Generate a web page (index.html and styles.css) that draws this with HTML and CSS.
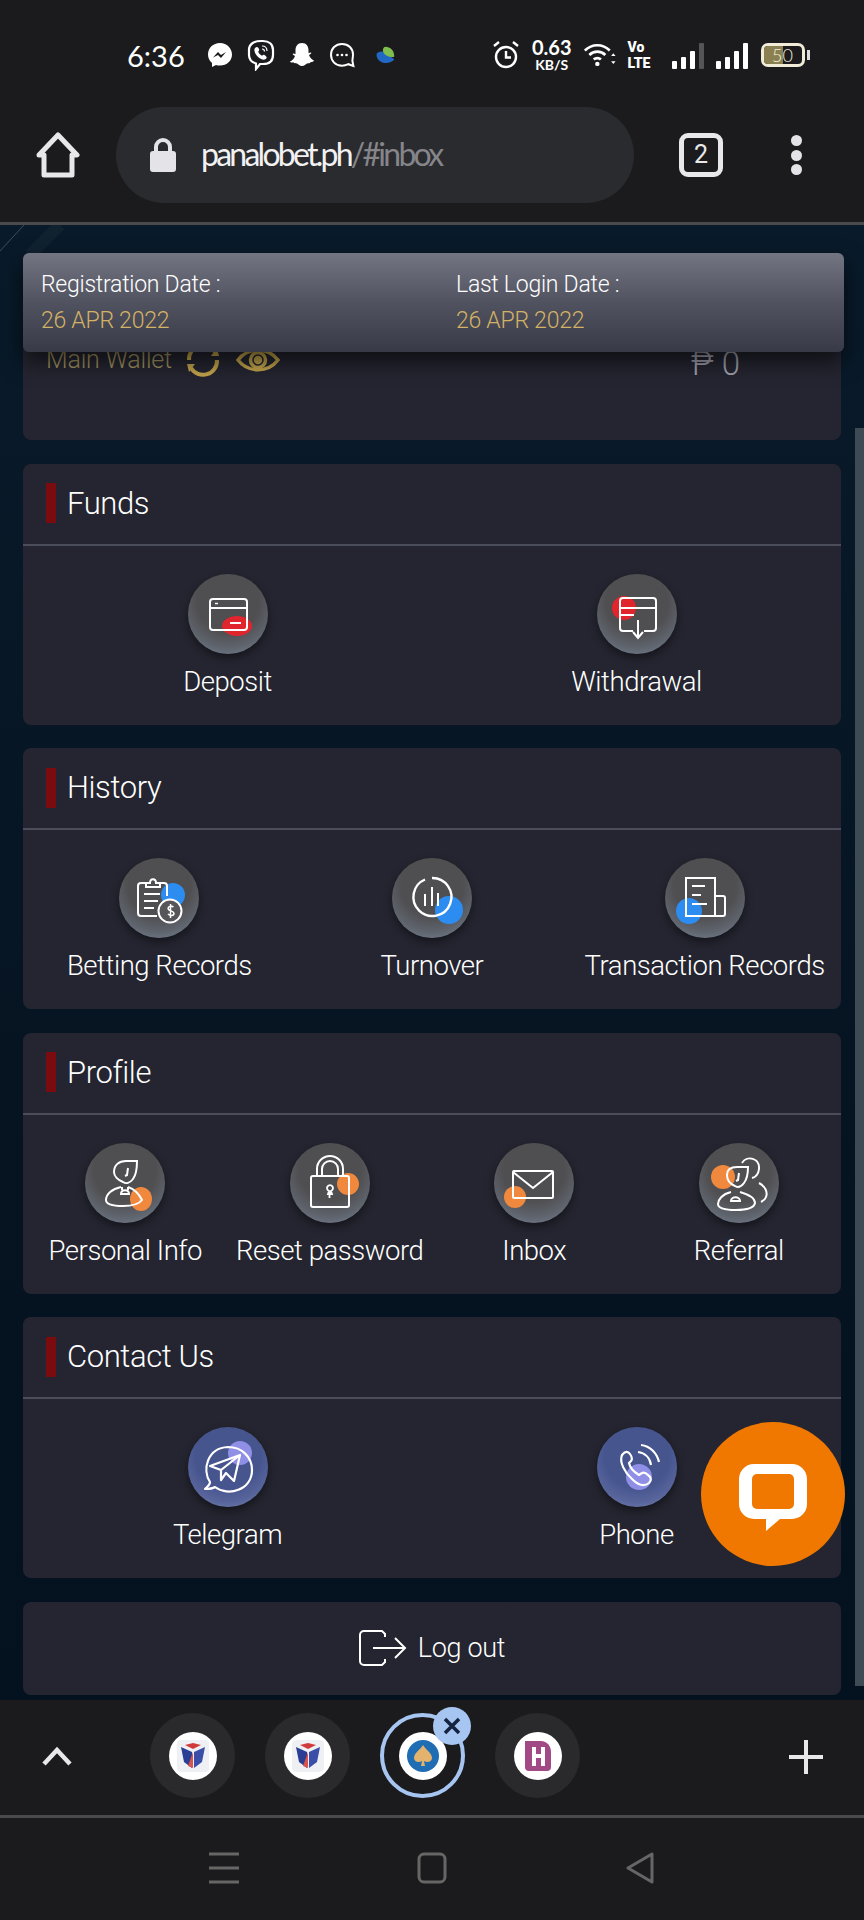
FILE: index.html
```html
<!DOCTYPE html>
<html lang="en">
<head>
  <meta charset="UTF-8" />
  <meta name="viewport" content="width=device-width, initial-scale=1.0"/>
  <title>panalobet.ph inbox</title>
  <link rel="stylesheet" href="styles.css">
</head>
<body>
  <div class="phone">
    <header class="browser-top">
      <div class="status-bar">
        <span class="time">6:36</span>
        <div class="status-apps">
          <svg class="st-icon" width="26" height="26" viewBox="0 0 26 26"><path d="M13 1C6 1 1 6 1 12.500c0 3.500 1.500 6.500 4 8.500v4l4-2c1.200.4 2.600.6 4 .6 7 0 12-5 12-11.100S20 1 13 1z" fill="#fff"/><path d="M6 15.500l5-5.500 3 3 5-3-5 6-3-3z" fill="#1b1b1d"/></svg>
          <svg class="st-icon" width="28" height="32" viewBox="0 0 28 32" fill="none" stroke="#fff"><path d="M14 2h2c6 0 10 3 10 9v5c0 6-4 9-10 9h-3l-4 5v-5.500C4 23 2 20 2 16v-5c0-6 5-9 12-9z" stroke-width="2.200"/><path d="M8 9c2-2 3-1 4 1 .6 1 0 2-.8 2.500.6 2 2 3.500 4 4.300.7-.8 1.500-1.300 2.500-.6 2 1.300 2.800 2.300 1 3.800-3 2-7-1-9-3.500C8 14.500 6.500 11 8 9z" fill="#fff" stroke="none"/><path d="M15 7c3 0 5 2 5 5M15 10c1.500 0 2.500 1 2.500 2.500" stroke-width="1.200"/></svg>
          <svg class="st-icon" width="26" height="26" viewBox="0 0 26 26"><path d="M13 1c4.500 0 6.500 3.500 6.500 7v3l2.500-.5c.8.500 0 1.500-2 2.500 1 3 3 4.500 5 5.500-.3 1.200-2 1.300-3.500 1.800-.5 1.500-2 .8-3.500 1.200-1.500.7-2.500 2.500-5 2.500s-3.500-1.800-5-2.500c-1.500-.4-3 .3-3.500-1.200C2.900 20.800 1.300 20.700 1 19.500c2-1 4-2.500 5-5.500-2-1-2.800-2-2-2.500l2.500.5V8c0-3.500 2-7 6.500-7z" fill="#fff"/></svg>
          <svg class="st-icon" width="26" height="26" viewBox="0 0 26 26" fill="none"><path d="M13 2c6.500 0 11 4.500 11 10.500 0 2.500-.6 4.500-.6 6.500l1 5-5-1.800c-2 1-4 1.600-6.400 1.600C6.500 23.800 2 19 2 12.800S6.500 2 13 2z" stroke="#fff" stroke-width="2"/><circle cx="8.500" cy="13" r="1.300" fill="#fff"/><circle cx="13" cy="13" r="1.300" fill="#fff"/><circle cx="17.500" cy="13" r="1.300" fill="#fff"/></svg>
          <svg class="st-icon leaf" width="22" height="20" viewBox="0 0 24 20"><path d="M2 8c4-3 8-2 9 0 3 2 8 4 10 7-3 4-11 5-15 2C3 15 1 12 2 8z" fill="#2168c4"/><path d="M11 1c6 0 10 4 10 11-5 1-10-1-12-5-1-3 0-5 2-6z" fill="#7fbe4e"/></svg>
        </div>
        <div class="status-right">
          <svg class="st-icon" width="28" height="30" viewBox="0 0 28 30" fill="none" stroke="#fff" stroke-width="2.400"><circle cx="14" cy="17" r="10"/><path d="M14 11v6.500h5M2 6l5-4M26 6l-5-4"/></svg>
          <div class="net-speed"><span class="speed-num">0.63</span><span class="speed-unit">KB/S</span></div>
          <svg class="st-icon" width="32" height="28" viewBox="0 0 36 28" fill="none" stroke="#fff" stroke-width="3"><path d="M1 9c8-8 20-8 28 0M6 14c5-5 13-5 18 0M11 19c2-2 6-2 8 0"/><circle cx="15" cy="24" r="2.500" fill="#fff" stroke="none"/><path d="M33 12l-2.500 3h5zM33 24l-2.500-3h5z" fill="#fff" stroke="none"/></svg>
          <div class="volte"><span>Vo</span><span>LTE</span></div>
          <div class="signal">
            <i class="bar h1"></i><i class="bar h2"></i><i class="bar h3"></i><i class="bar h4 off"></i>
          </div>
          <div class="signal">
            <i class="bar h1"></i><i class="bar h2"></i><i class="bar h3"></i><i class="bar h4"></i>
          </div>
          <div class="battery"><div class="battery-body"><div class="battery-fill"></div><span>50</span></div><i class="battery-tip"></i></div>
        </div>
      </div>
      <div class="url-row">
        <svg class="home-icon" width="44" height="46" viewBox="0 0 44 46" fill="none" stroke="#e8e8ea" stroke-width="5" stroke-linejoin="round"><path d="M3 23L22 3l19 20h-5v20H8V23z"/></svg>
        <div class="url-pill">
          <svg class="lock-icon" width="26" height="34" viewBox="0 0 26 34"><path d="M6 16V9a7 7 0 0 1 14 0v7" fill="none" stroke="#e4e4e8" stroke-width="4"/><rect y="13" width="26" height="21" rx="3" fill="#e4e4e8"/></svg>
          <span class="url-text">panalobet.ph<span class="url-path">/#inbox</span></span>
        </div>
        <div class="tab-count">2</div>
        <div class="kebab"><i></i><i></i><i></i></div>
      </div>
    </header>

    <main class="page">
      <svg class="page-streak" width="90" height="40" viewBox="0 0 90 40" fill="none"><path d="M24 0L0 26" stroke="#3d4d5c"/><path d="M60 0L30 30" stroke="#10212f" stroke-width="12"/></svg>

      <section class="card wallet-card">
        <div class="wallet-row">
          <span class="wallet-label">Main Wallet</span>
          <svg width="36" height="36" viewBox="0 0 36 36" fill="none" stroke="#c4a54c" stroke-width="4"><path d="M4 18A14 14 0 0 1 30 10M32 18A14 14 0 0 1 6 26"/><path d="M26 14h8l-2-8zM10 22H2l2 8z" fill="#c4a54c" stroke="none"/></svg>
          <svg class="eye" width="44" height="32" viewBox="0 0 44 32" fill="none" stroke="#c4a54c" stroke-width="3.500"><path d="M2 16C12 3 32 3 42 16 32 29 12 29 2 16z"/><circle cx="22" cy="16" r="7.500"/><circle cx="22" cy="16" r="2.500" fill="#c4a54c"/></svg>
          <span class="wallet-amount"><span class="peso">₱</span> 0</span>
        </div>
      </section>

      <section class="card">
        <h2 class="card-title">Funds</h2>
        <div class="items cols-2">
          <div class="item">
            <div class="gloss">
              <svg width="80" height="80" viewBox="0 0 80 80" fill="none" stroke="#fff" stroke-width="2"><ellipse cx="49" cy="52" rx="15" ry="10" fill="#e0262c" stroke="none"/><rect x="22" y="25" width="37" height="31" rx="3"/><path d="M22 34h37M42 49h11"/><path d="M27 29.500h3" stroke-width="1.500"/></svg>
            </div>
            <span class="item-label">Deposit</span>
          </div>
          <div class="item">
            <div class="gloss">
              <svg width="80" height="80" viewBox="0 0 80 80" fill="none" stroke="#fff" stroke-width="2"><circle cx="27" cy="34" r="12" fill="#e0262c" stroke="none"/><path d="M36 57H26a3 3 0 0 1-3-3V27a3 3 0 0 1 3-3h30a3 3 0 0 1 3 3v27a3 3 0 0 1-3 3H47"/><path d="M23 34h36M24 41h13M41 46v17M36 58l5 6 5-6"/></svg>
            </div>
            <span class="item-label">Withdrawal</span>
          </div>
        </div>
      </section>

      <section class="card">
        <h2 class="card-title">History</h2>
        <div class="items cols-3">
          <div class="item">
            <div class="gloss">
              <svg width="80" height="80" viewBox="0 0 80 80" fill="none" stroke="#fff" stroke-width="2"><circle cx="54" cy="37" r="12" fill="#2d8cf0" stroke="none"/><path d="M38 58H22a3 3 0 0 1-3-3V28a3 3 0 0 1 3-3h5M40 25h5a3 3 0 0 1 3 3v10"/><path d="M27 29v-4h4c0-5 6-5 6 0h4v4zM25 36h16M25 43h14M25 50h10"/><circle cx="51" cy="53" r="11.500" fill="#55555a"/><path d="M54.500 49c-3-2-6.500 0-5 2.500 1 1.500 5.500 1.500 5.500 4 0 2.500-4 2.500-6 .5M51.500 46v14" stroke-width="1.500"/></svg>
            </div>
            <span class="item-label">Betting Records</span>
          </div>
          <div class="item">
            <div class="gloss">
              <svg width="80" height="80" viewBox="0 0 80 80" fill="none" stroke="#fff" stroke-width="2"><circle cx="57" cy="52" r="14" fill="#2d8cf0" stroke="none"/><path d="M33 21.500A19 19 0 1 0 40 20" stroke-width="2.400"/><path d="M33 36v12M40 29v19M46 35v13"/></svg>
            </div>
            <span class="item-label">Turnover</span>
          </div>
          <div class="item">
            <div class="gloss">
              <svg width="80" height="80" viewBox="0 0 80 80" fill="none" stroke="#fff" stroke-width="2"><circle cx="24" cy="53" r="13" fill="#2d8cf0" stroke="none"/><path d="M50 58H21V20h29v38zM50 38h8a2 2 0 0 1 2 2v16a2 2 0 0 1-2 2h-8M27 28h13M27 37h9M27 46h15"/></svg>
            </div>
            <span class="item-label">Transaction Records</span>
          </div>
        </div>
      </section>

      <section class="card">
        <h2 class="card-title">Profile</h2>
        <div class="items cols-4">
          <div class="item">
            <div class="gloss">
              <svg width="80" height="80" viewBox="0 0 80 80" fill="none" stroke="#fff" stroke-width="2"><ellipse cx="56" cy="56" rx="11" ry="12" fill="#f0883e" stroke="none"/><path d="M29 29c0-7 5-11 12-11h11c0 8-1 14-4 18-3 4-7 5-10 3-5-2-9-6-9-10zM43 25l-1 7-2 1"/><path d="M36 44c-9 2-15 7-15 13 0 4 6 6 17 6 10 0 16-2 19-6-3-6-8-11-14-13"/><path d="M36 51c0-5 8-5 8 0zM37 44v3M43 44v3"/></svg>
            </div>
            <span class="item-label">Personal Info</span>
          </div>
          <div class="item">
            <div class="gloss">
              <svg width="80" height="80" viewBox="0 0 80 80" fill="none" stroke="#fff" stroke-width="2"><circle cx="58" cy="41" r="11" fill="#f0883e" stroke="none"/><path d="M27 33V26a13 13 0 0 1 26 0v7M32 33v-7a8 8 0 0 1 16 0v7"/><rect x="21" y="33" width="38" height="31" rx="2"/><path d="M38 51h4l-1-3a3 3 0 1 0-2 0zM39.500 48v7" stroke-width="1.800"/></svg>
            </div>
            <span class="item-label">Reset password</span>
          </div>
          <div class="item">
            <div class="gloss">
              <svg width="80" height="80" viewBox="0 0 80 80" fill="none" stroke="#fff" stroke-width="2"><circle cx="21" cy="54" r="11" fill="#f0883e" stroke="none"/><rect x="19" y="28" width="40" height="27" rx="1"/><path d="M19 29l20 16 20-16"/></svg>
            </div>
            <span class="item-label">Inbox</span>
          </div>
          <div class="item">
            <div class="gloss">
              <svg width="80" height="80" viewBox="0 0 80 80" fill="none" stroke="#fff" stroke-width="2"><circle cx="24" cy="34" r="12" fill="#f0883e" stroke="none"/><path d="M43 20c5-8 18-5 17 6-.6 5-3 8-7 9M60 40c6 3 9 9 7 14-1 3-3 4-5 5"/><path d="M28 32c0-6 4-8 10-8h11c0 7-1 12-4 16-3 4-6 5-9 3-5-2-8-6-8-11zM40 30l-1 7-2 1"/><path d="M32 49c-9 2-13 8-13 12s6 6 18 6 18-2 19-7c0-5-8-9-15-11"/><path d="M32 58c0-5 9-5 9 0z"/></svg>
            </div>
            <span class="item-label">Referral</span>
          </div>
        </div>
      </section>

      <section class="card">
        <h2 class="card-title">Contact Us</h2>
        <div class="items cols-2">
          <div class="item">
            <div class="gloss blue">
              <svg width="80" height="80" viewBox="0 0 80 80" fill="none" stroke="#fff" stroke-width="2.200" stroke-linejoin="round"><circle cx="52" cy="26" r="12" fill="#8f8fe6" stroke="none"/><path d="M17 62c3-3 5-4 5-7-8-12-3-34 18-35 14 0 24 10 24 23 0 20-24 27-37 17-3 2-7 2-10 2z"/><path d="M22 39l30-11-6 26-8-8-5 7V43zM33 43l19-15"/></svg>
            </div>
            <span class="item-label">Telegram</span>
          </div>
          <div class="item">
            <div class="gloss blue">
              <svg width="80" height="80" viewBox="0 0 80 80" fill="none" stroke="#fff" stroke-width="2.200"><circle cx="42" cy="50" r="13" fill="#8f8fe6" stroke="none"/><path d="M25 28c3-4 6-4 8-1 2 3 3 5 1 7l-2 2c1 5 5 9 10 12l3-2c2-1 4 0 6 2 3 2 4 5 1 8-5 4-11 2-17-4-7-6-13-17-10-24z"/><path d="M41 25c7 1 12 6 13 13M44 18c9 1 16 8 18 17"/></svg>
            </div>
            <span class="item-label">Phone</span>
          </div>
        </div>
      </section>

      <section class="card logout-card">
        <svg width="48" height="36" viewBox="0 0 48 36" fill="none" stroke="#fff" stroke-width="2"><path d="M26 7V4l-3-3H5a4 4 0 0 0-4 4v26a4 4 0 0 0 4 4h18l3-3v-3M14 18h31M36 8l10 10-10 10"/></svg>
        <span class="logout-text">Log out</span>
      </section>

      <div class="date-strip">
        <div class="date-col">
          <span class="date-label">Registration Date :</span>
          <span class="date-value">26 APR 2022</span>
        </div>
        <div class="date-col">
          <span class="date-label">Last Login Date :</span>
          <span class="date-value">26 APR 2022</span>
        </div>
      </div>
      <div class="scroll-thumb"></div>
      <div class="chat-btn">
        <svg width="70" height="68" viewBox="0 0 70 68"><path d="M16 1h38a15 15 0 0 1 15 15v25a15 15 0 0 1-15 15H42L28 68V56H16A15 15 0 0 1 1 41V16A15 15 0 0 1 16 1z" fill="#fff"/><rect x="14" y="11" width="42" height="35" rx="5" fill="#f07800"/></svg>
      </div>
    </main>

    <div class="tab-strip">
      <svg class="chevron" width="30" height="20" viewBox="0 0 30 20" fill="none" stroke="#e8e8ea" stroke-width="4.500"><path d="M2 18L15 4l13 14"/></svg>
      <div class="tabs">
        <div class="tab">
          <div class="favicon"><svg width="32" height="32" viewBox="0 0 32 32"><rect width="32" height="32" rx="4" fill="#eef0f4"/><path d="M4 7l11 5v16L7 22z" fill="#2a3f94"/><path d="M28 7l-11 5v16l8-6z" fill="#3c4fa8"/><path d="M8 5l8 4 8-4-8-2z" fill="#d13a3a"/><path d="M16 12l-5 14 5 2z" fill="#d9544d"/></svg></div>
        </div>
        <div class="tab">
          <div class="favicon"><svg width="32" height="32" viewBox="0 0 32 32"><rect width="32" height="32" rx="4" fill="#eef0f4"/><path d="M4 7l11 5v16L7 22z" fill="#2a3f94"/><path d="M28 7l-11 5v16l8-6z" fill="#3c4fa8"/><path d="M8 5l8 4 8-4-8-2z" fill="#d13a3a"/><path d="M16 12l-5 14 5 2z" fill="#d9544d"/></svg></div>
        </div>
        <div class="tab active">
          <div class="favicon"><svg width="34" height="34" viewBox="0 0 34 34"><circle cx="17" cy="17" r="16" fill="#1f6db3"/><path d="M17 6c3 5 9 8 9 13 0 4-5 5-8 3l1 5h-4l1-5c-3 2-8 1-8-3 0-5 6-8 9-13z" fill="#e3b26d"/></svg></div>
          <div class="tab-close"><svg width="20" height="20" viewBox="0 0 20 20" stroke="#14233f" stroke-width="3.500"><path d="M3 3l14 14M17 3L3 17"/></svg></div>
        </div>
        <div class="tab">
          <div class="favicon"><svg width="32" height="32" viewBox="0 0 32 32"><path d="M3 1h16c6 0 10 5 10 11v15a4 4 0 0 1-4 4H7a4 4 0 0 1-4-4z" fill="#a24a85"/><path d="M10 7h4v7h5V7h4v19h-4v-8h-5v8h-4z" fill="#fff"/></svg></div>
        </div>
      </div>
      <svg class="plus" width="36" height="36" viewBox="0 0 36 36" stroke="#e8e8ea" stroke-width="4"><path d="M18 1v34M1 18h34"/></svg>
    </div>

    <nav class="nav-bar">
      <svg width="30" height="32" viewBox="0 0 30 32" stroke="#666" stroke-width="3"><path d="M0 2h30M0 16h30M0 30h30"/></svg>
      <svg width="30" height="32" viewBox="0 0 30 32" fill="none" stroke="#666" stroke-width="3"><rect x="2" y="2" width="26" height="28" rx="5"/></svg>
      <svg width="30" height="32" viewBox="0 0 30 32" fill="none" stroke="#666" stroke-width="3" stroke-linejoin="round"><path d="M27 2v28L3 16z"/></svg>
    </nav>
  </div>
</body>
</html>
```

FILE: styles.css
```css
* {
  box-sizing: border-box;
}

body {
  margin: 0;
  background: #1b1b1d;
  font-family: 'Roboto', sans-serif;
  color: #ececee;
}

.phone {
  display: flex;
  flex-direction: column;
  width: 864px;
  height: 1920px;
  overflow: hidden;
}

/* browser chrome */
.browser-top {
  height: 225px;
  flex: none;
  background: #1b1b1d;
  border-bottom: 3px solid #4a4a4c;
}

.status-bar {
  display: flex;
  align-items: center;
  height: 107px;
  padding: 3px 0 0 127px;
}

.time {
  font-family: 'Lato', sans-serif;
  font-size: 29px;
  font-weight: 400;
  color: #fff;
  width: 80px;
}

.status-apps {
  display: flex;
  align-items: center;
  gap: 14px;
  width: 285px;
}

.leaf {
  margin-left: 6px;
}

.status-right {
  display: flex;
  align-items: center;
  gap: 12px;
}

.st-icon {
  flex: none;
}

.net-speed {
  display: flex;
  flex-direction: column;
  align-items: center;
  font-family: 'Lato', sans-serif;
  color: #fff;
}

.speed-num {
  font-size: 20px;
  font-weight: 700;
  line-height: 19px;
}

.speed-unit {
  font-size: 14px;
  font-weight: 700;
  line-height: 15px;
}

.volte {
  display: flex;
  flex-direction: column;
  font-family: 'Roboto', sans-serif;
  font-size: 14px;
  font-weight: 900;
  line-height: 16px;
  width: 32px;
  color: #fff;
}

.signal {
  display: flex;
  align-items: flex-end;
  gap: 4px;
  height: 28px;
}

.bar {
  width: 5px;
  background: #fff;
  border-radius: 1px;
}

.bar.h1 { height: 8px; }
.bar.h2 { height: 12px; }
.bar.h3 { height: 18px; }
.bar.h4 { height: 26px; }
.bar.off { background: #555; }

.battery {
  display: flex;
  align-items: center;
  gap: 2px;
  margin-left: 1px;
}

.battery-body {
  position: relative;
  width: 44px;
  height: 24px;
  border: 3px solid #f0ecd8;
  border-radius: 7px;
  overflow: hidden;
  text-align: center;
  font-family: 'Lato', sans-serif;
  font-size: 18px;
  font-weight: 300;
  line-height: 18px;
  color: #f4f0dc;
}

.battery-fill {
  position: absolute;
  left: 0;
  top: 0;
  bottom: 0;
  width: 50%;
  background: #8a8052;
}

.battery-body span {
  position: relative;
}

.battery-tip {
  width: 3px;
  height: 10px;
  background: #ddd;
}

.url-row {
  display: flex;
  align-items: center;
  height: 96px;
  padding-left: 36px;
}

.home-icon {
  flex: none;
}

.url-pill {
  display: flex;
  align-items: center;
  width: 518px;
  height: 96px;
  margin-left: 36px;
  padding-left: 34px;
  background: #2a2b2f;
  border-radius: 48px;
}

.url-text {
  margin: 0 0 3px 25px;
  font-family: 'Lato', sans-serif;
  font-size: 32px;
  letter-spacing: -2.750px;
  color: #f2f2f2;
}

.url-path {
  color: #85858a;
}

.tab-count {
  width: 44px;
  height: 44px;
  margin-left: 45px;
  border: 5px solid #e8e8ea;
  border-radius: 9px;
  font-size: 25px;
  font-weight: 400;
  line-height: 34px;
  text-align: center;
  color: #e8e8ea;
}

.kebab {
  display: flex;
  flex-direction: column;
  gap: 3.500px;
  margin-left: 68px;
}

.kebab i {
  width: 11px;
  height: 11px;
  border-radius: 50%;
  background: #e4e4e8;
}

/* page content */
.page {
  position: relative;
  flex: none;
  display: flex;
  flex-direction: column;
  gap: 23.500px;
  height: 1475px;
  padding: 28px 23px 0;
  overflow: hidden;
  background: #07141f linear-gradient(#091a2a, #061422 60%, #041220);
}

.page-streak {
  position: absolute;
  left: 0;
  top: 0;
}

.card {
  flex: none;
  width: 818px;
  height: 261px;
  background: #242530;
  border-radius: 8px;
}

.wallet-card {
  height: 187px;
  padding: 83px 23px 0;
}

.wallet-row {
  display: flex;
  align-items: center;
  gap: 13px;
}

.wallet-label {
  font-size: 25px;
  font-weight: 300;
  letter-spacing: -0.200px;
  color: #a3935f;
}

.eye {
  margin-left: 2px;
}

.wallet-amount {
  margin-left: auto;
  margin-right: 78px;
  padding-top: 8px;
  font-size: 33px;
  font-weight: 300;
  color: #a2a2b0;
}

.card-title {
  display: flex;
  align-items: center;
  gap: 11px;
  height: 82px;
  margin: 0;
  padding: 0 0 1px 23px;
  border-bottom: 2px solid #4c4d5a;
  font-size: 31px;
  font-weight: 300;
  letter-spacing: -0.400px;
  color: #fff;
}

.card-title::before {
  content: "";
  width: 10px;
  height: 40px;
  background: #7a0c10;
}

.items {
  display: grid;
  padding-top: 28px;
}

.cols-2 { grid-template-columns: repeat(2, 1fr); }
.cols-3 { grid-template-columns: repeat(3, 1fr); }
.cols-4 { grid-template-columns: repeat(4, 1fr); }

.item {
  display: flex;
  flex-direction: column;
  align-items: center;
  gap: 10px;
}

.item-label {
  font-size: 27.500px;
  font-weight: 300;
  letter-spacing: -0.450px;
  line-height: 36px;
  white-space: nowrap;
  color: #fff;
}

.gloss {
  width: 80px;
  height: 80px;
  border-radius: 50%;
  background: radial-gradient(circle at 50% 34%, #4f4e50 46%, #5e636c 70%, #7f8da0 100%);
  box-shadow: 0 4px 8px rgba(0, 0, 0, 0.45);
  overflow: hidden;
}

.gloss svg {
  display: block;
}

.gloss.blue {
  background: radial-gradient(circle at 50% 36%, #47558f 50%, #58659c 72%, #8592b4 100%);
}

.logout-card {
  display: flex;
  align-items: center;
  justify-content: center;
  gap: 11px;
  height: 93px;
}

.logout-text {
  font-size: 27px;
  font-weight: 300;
  letter-spacing: -0.300px;
  color: #fff;
}

.date-strip {
  position: absolute;
  left: 23px;
  top: 28px;
  display: grid;
  grid-template-columns: 415px 1fr;
  width: 821px;
  height: 99px;
  padding: 17px 18px 0;
  background: linear-gradient(#737582, #51525f 50%, #393a48);
  border-radius: 6px;
  box-shadow: 0 10px 22px rgba(0, 0, 0, 0.6);
}

.date-col {
  display: flex;
  flex-direction: column;
  gap: 7px;
  font-size: 23px;
  font-weight: 300;
  letter-spacing: -0.250px;
  line-height: 29px;
  color: #fff;
}

.date-value {
  color: #d4b264;
}

.scroll-thumb {
  position: absolute;
  right: 0;
  top: 203px;
  width: 9px;
  height: 1258px;
  background: #3e4a54;
}

.chat-btn {
  position: absolute;
  left: 701px;
  top: 1197px;
  display: flex;
  align-items: center;
  justify-content: center;
  width: 144px;
  height: 144px;
  padding-top: 6px;
  border-radius: 50%;
  background: #f07800;
}

/* bottom tab strip */
.tab-strip {
  position: relative;
  flex: none;
  display: flex;
  align-items: center;
  height: 118px;
  padding: 0 0 4px 42px;
  background: #1b1b1d;
  border-bottom: 3px solid #4a4a4c;
}

.tabs {
  display: flex;
  gap: 30px;
  margin-left: 78px;
}

.tab {
  position: relative;
  display: flex;
  align-items: center;
  justify-content: center;
  width: 85px;
  height: 85px;
  border-radius: 50%;
  background: #2a2a2c;
}

.tab.active {
  background: transparent;
  border: 4px solid #a6c5f0;
}

.favicon {
  display: flex;
  align-items: center;
  justify-content: center;
  width: 48px;
  height: 48px;
  border-radius: 50%;
  background: #fff;
}

.tab-close {
  position: absolute;
  left: 49px;
  top: -10px;
  display: flex;
  align-items: center;
  justify-content: center;
  width: 38px;
  height: 38px;
  border-radius: 50%;
  background: #a6c5f0;
}

.plus {
  position: absolute;
  left: 788px;
  top: 39px;
}

.nav-bar {
  flex: 1;
  display: flex;
  justify-content: center;
  gap: 178px;
  padding-top: 34px;
  background: #1b1b1d;
}
```
